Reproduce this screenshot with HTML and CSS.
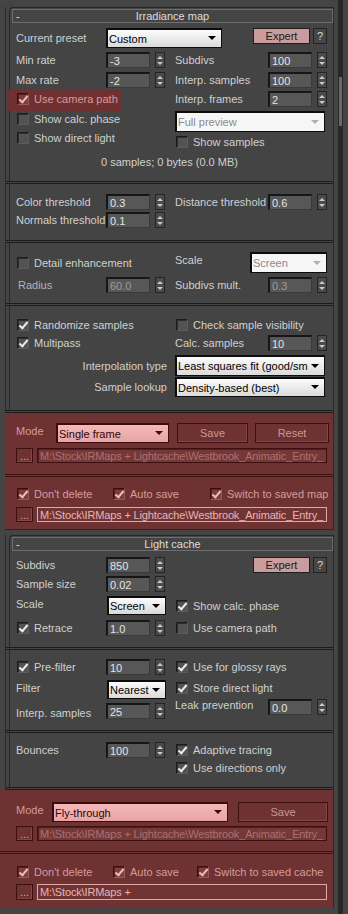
FILE: index.html
```html
<!DOCTYPE html>
<html lang="en">
<head>
    <meta charset="UTF-8">
    <title>GI settings</title>
    <link rel="stylesheet" href="styles.css">
</head>
<body>
<div class="screen">
    <div class="rollouts">

        <!-- Irradiance map rollout -->
        <div class="rollout first">
            <div class="cap"><div class="head"><span class="minus">-</span><span class="title">Irradiance map</span><span></span></div></div>

            <div class="group ir-a">
                <div class="line h20">
                    <span class="lbl">Current preset</span>
                    <div class="dd w-preset"><span class="txt">Custom</span><i class="arrow"></i></div>
                    <button class="btn expert">Expert</button>
                    <button class="btn help">?</button>
                </div>
                <div class="row mt4">
                    <div class="cell"><span class="lbl">Min rate</span><span class="num">-3</span><span class="spin"></span></div>
                    <div class="cell"><span class="lbl r">Subdivs</span><span class="num">100</span><span class="spin"></span></div>
                </div>
                <div class="row mt4">
                    <div class="cell"><span class="lbl">Max rate</span><span class="num">-2</span><span class="spin"></span></div>
                    <div class="cell"><span class="lbl r">Interp. samples</span><span class="num">100</span><span class="spin"></span></div>
                </div>
                <div class="row mt3">
                    <div class="cell"><div class="hl"><span class="chk on"></span><span class="cb-text">Use camera path</span></div></div>
                    <div class="cell"><span class="lbl r">Interp. frames</span><span class="num">2</span><span class="spin"></span></div>
                </div>
                <div class="row h21 mt4">
                    <div class="cell top"><label class="cb down2"><span class="chk"></span>Show calc. phase</label></div>
                    <div class="cell"><div class="dd off w-wide"><span class="txt">Full preview</span><i class="arrow"></i></div></div>
                </div>
                <div class="row">
                    <div class="cell top"><label class="cb"><span class="chk"></span>Show direct light</label></div>
                    <div class="cell bottom"><label class="cb"><span class="chk"></span>Show samples</label></div>
                </div>
                <div class="info">0 samples; 0 bytes (0.0 MB)</div>
            </div>

            <div class="group ir-b">
                <div class="row">
                    <div class="cell"><span class="lbl">Color threshold</span><span class="num">0.3</span><span class="spin"></span></div>
                    <div class="cell"><span class="lbl r">Distance threshold</span><span class="num">0.6</span><span class="spin"></span></div>
                </div>
                <div class="row mt2">
                    <div class="cell"><span class="lbl">Normals threshold</span><span class="num">0.1</span><span class="spin"></span></div>
                </div>
            </div>

            <div class="group ir-c">
                <div class="row h21">
                    <div class="cell"><label class="cb"><span class="chk"></span>Detail enhancement</label></div>
                    <div class="cell"><span class="lbl scale-lbl">Scale</span><div class="dd off w-scale"><span class="txt">Screen</span><i class="arrow"></i></div></div>
                </div>
                <div class="row mt4">
                    <div class="cell"><span class="lbl dim indent">Radius</span><span class="num dim">60.0</span><span class="spin"></span></div>
                    <div class="cell"><span class="lbl r">Subdivs mult.</span><span class="num dim">0.3</span><span class="spin"></span></div>
                </div>
            </div>

            <div class="group ir-d">
                <div class="row">
                    <div class="cell"><label class="cb"><span class="chk on"></span>Randomize samples</label></div>
                    <div class="cell"><label class="cb"><span class="chk"></span>Check sample visibility</label></div>
                </div>
                <div class="row mt2">
                    <div class="cell"><label class="cb"><span class="chk on"></span>Multipass</label></div>
                    <div class="cell"><span class="lbl r">Calc. samples</span><span class="num">10</span><span class="spin"></span></div>
                </div>
                <div class="line h21 mt4">
                    <span class="lbl right">Interpolation type</span>
                    <div class="dd w-wide"><span class="txt">Least squares fit (good/sm</span><i class="arrow"></i></div>
                </div>
                <div class="line h20 mt1">
                    <span class="lbl right">Sample lookup</span>
                    <div class="dd w-wide"><span class="txt">Density-based (best)</span><i class="arrow"></i></div>
                </div>
            </div>

            <div class="group red red-a ir-e">
                <div class="line h20">
                    <span class="lbl mode">Mode</span>
                    <div class="dd pink w-single"><span class="txt">Single frame</span><i class="arrow"></i></div>
                    <button class="btn rbtn save1">Save</button>
                    <button class="btn rbtn reset">Reset</button>
                </div>
                <div class="line h15 mt5">
                    <button class="btn dots">...</button>
                    <div class="path">M:\Stock\IRMaps + Lightcache\Westbrook_Animatic_Entry_</div>
                </div>
            </div>

            <div class="group red red-a last ir-f">
                <div class="line h16">
                    <label class="cb w96"><span class="chk on"></span>Don't delete</label>
                    <label class="cb w97"><span class="chk on"></span>Auto save</label>
                    <label class="cb"><span class="chk on"></span>Switch to saved map</label>
                </div>
                <div class="line h15 mt5">
                    <button class="btn dots">...</button>
                    <div class="path active">M:\Stock\IRMaps + Lightcache\Westbrook_Animatic_Entry_</div>
                </div>
            </div>
        </div>

        <!-- Light cache rollout -->
        <div class="rollout second">
            <div class="cap"><div class="head"><span class="minus">-</span><span class="title">Light cache</span><span></span></div></div>

            <div class="group lc-a">
                <div class="line">
                    <span class="lbl">Subdivs</span><span class="num">850</span><span class="spin"></span>
                    <button class="btn expert lc">Expert</button>
                    <button class="btn help lc">?</button>
                </div>
                <div class="row mt3">
                    <div class="cell"><span class="lbl">Sample size</span><span class="num">0.02</span><span class="spin"></span></div>
                </div>
                <div class="row h19 mt4">
                    <div class="cell"><span class="lbl up">Scale</span><div class="dd w-small"><span class="txt">Screen</span><i class="arrow"></i></div></div>
                    <div class="cell"><label class="cb"><span class="chk on"></span>Show calc. phase</label></div>
                </div>
                <div class="row mt5">
                    <div class="cell"><label class="cb w90"><span class="chk on"></span>Retrace</label><span class="num">1.0</span><span class="spin"></span></div>
                    <div class="cell"><label class="cb"><span class="chk"></span>Use camera path</label></div>
                </div>
            </div>

            <div class="group lc-b">
                <div class="row">
                    <div class="cell"><label class="cb w90"><span class="chk on"></span>Pre-filter</label><span class="num">10</span><span class="spin"></span></div>
                    <div class="cell"><label class="cb"><span class="chk on"></span>Use for glossy rays</label></div>
                </div>
                <div class="row h19 mt5">
                    <div class="cell"><span class="lbl up">Filter</span><div class="dd w-small"><span class="txt">Nearest</span><i class="arrow"></i></div></div>
                    <div class="cell top"><label class="cb down2"><span class="chk on"></span>Store direct light</label></div>
                </div>
                <div class="row h20">
                    <div class="cell bottom"><span class="lbl">Interp. samples</span><span class="num">25</span><span class="spin"></span></div>
                    <div class="cell top"><span class="lbl r">Leak prevention</span><span class="num">0.0</span><span class="spin"></span></div>
                </div>
            </div>

            <div class="group lc-c">
                <div class="row">
                    <div class="cell"><span class="lbl">Bounces</span><span class="num">100</span><span class="spin"></span></div>
                    <div class="cell"><label class="cb"><span class="chk on"></span>Adaptive tracing</label></div>
                </div>
                <div class="row mt2">
                    <div class="cell"></div>
                    <div class="cell"><label class="cb"><span class="chk on"></span>Use directions only</label></div>
                </div>
            </div>

            <div class="group red red-b lc-d">
                <div class="line h20">
                    <span class="lbl mode short">Mode</span>
                    <div class="dd pink w-fly"><span class="txt">Fly-through</span><i class="arrow"></i></div>
                    <button class="btn rbtn save2">Save</button>
                </div>
                <div class="line h15 mt4">
                    <button class="btn dots">...</button>
                    <div class="path">M:\Stock\IRMaps + Lightcache\Westbrook_Animatic_Entry_</div>
                </div>
            </div>

            <div class="group red red-b last lc-e">
                <div class="line h16">
                    <label class="cb w96"><span class="chk on"></span>Don't delete</label>
                    <label class="cb w84"><span class="chk on"></span>Auto save</label>
                    <label class="cb"><span class="chk on"></span>Switch to saved cache</label>
                </div>
                <div class="line h16 mt4">
                    <button class="btn dots">...</button>
                    <div class="path active">M:\Stock\IRMaps +</div>
                </div>
            </div>
        </div>
    </div>

    <div class="scrollbar"><div class="thumb"></div></div>
</div>
</body>
</html>
```

FILE: styles.css
```css
* {
    box-sizing: border-box;
}

body {
    margin: 0;
    width: 348px;
    height: 914px;
    overflow: hidden;
    background-color: #444;
    font-family: "Liberation Sans", Arial, sans-serif;
    font-size: 11px;
    color: #d0d0d0;
}

.screen {
    display: flex;
    height: 914px;
}

.rollouts {
    width: 338px;
}

.scrollbar {
    width: 5px;
    height: 914px;
    background-color: #272727;
}

.thumb {
    margin: 77px 0 0 1px;
    width: 3px;
    height: 49px;
    background-color: #6a6a6a;
}

/* rollout frame */
.rollout {
    margin-left: 5px;
    width: 329px;
    border-left: 1px solid #2a2a2a;
    border-right: 1px solid #2a2a2a;
}

.rollout.first {
    margin-top: 7px;
}

.rollout.second {
    margin-top: 5px;
}

.cap {
    margin-left: 3px;
    height: 16px;
    padding: 1px 0 0 2px;
    border-top: 1px solid #262626;
    border-left: 1px solid #262626;
    border-top-left-radius: 4px;
}

.head {
    height: 14px;
    border: 1px solid #6e6e6e;
    display: grid;
    grid-template-columns: 1fr auto 1fr;
    align-items: center;
    color: #dedede;
}

.minus {
    padding-left: 3px;
    line-height: 10px;
}

.title {
    line-height: 12px;
}

/* groups */
.group {
    padding-left: 10px;
    border-bottom: 3px double #1c1c1c;
    box-shadow: inset 3px 0 0 #444, inset 4px 0 0 #262626;
}

.ir-a { padding-top: 5px; padding-bottom: 13px; }
.ir-b { padding-top: 10px; padding-bottom: 12px; }
.ir-c { padding-top: 9px; padding-bottom: 10px; }
.ir-d { padding-top: 11px; padding-bottom: 13px; }
.ir-e { padding-top: 10px; padding-bottom: 11px; }
.ir-f { padding-top: 9px; padding-bottom: 7px; }

.lc-a { padding-top: 6px; padding-bottom: 11px; }
.lc-b { padding-top: 9px; padding-bottom: 11px; }
.lc-c { padding-top: 9px; padding-bottom: 11px; }
.lc-d { padding-top: 12px; padding-bottom: 10px; }
.lc-e { padding-top: 10px; padding-bottom: 8px; }

.red {
    background-color: #6f3232;
    border-bottom-color: #3e1212;
    box-shadow: none;
    color: #d49c9c;
}

.red-a {
    margin-left: -1px;
    padding-left: 11px;
}

.red-b {
    margin-left: -6px;
    padding-left: 16px;
}

.red.last {
    border-bottom: 1px solid #4a1a1a;
}

.lc-e.last {
    border-bottom: none;
}

/* rows */
.row {
    display: grid;
    grid-template-columns: 159px 152px;
    height: 16px;
}

.line {
    display: flex;
    align-items: center;
    height: 16px;
}

.cell {
    display: flex;
    align-items: center;
}

.cell.top { align-items: flex-start; }
.cell.bottom { align-items: flex-end; }

.h15 { height: 15px; }
.h16 { height: 16px; }
.h19 { height: 19px; }
.h20 { height: 20px; }
.h21 { height: 21px; }

.mt1 { margin-top: 1px; }
.mt2 { margin-top: 2px; }
.mt3 { margin-top: 3px; }
.mt4 { margin-top: 4px; }
.mt5 { margin-top: 5px; }

.lbl {
    flex: none;
    width: 90px;
    white-space: nowrap;
}

.lbl.r { width: 93px; }
.lbl.up { align-self: flex-start; margin-top: 2px; }
.lbl.indent { padding-left: 2px; }
.lbl.dim { color: #b4b4b4; }
.lbl.scale-lbl { width: 75px; align-self: flex-start; margin-top: 2px; }

.lbl.right {
    width: 152px;
    text-align: right;
    padding-right: 1px;
    margin-right: 7px;
}

.lbl.mode { width: 40px; margin-top: -4px; }
.lbl.mode.short { width: 36px; }

.info {
    margin-top: 8px;
    height: 12px;
    line-height: 12px;
    text-align: center;
    margin-left: -10px;
}

/* number fields and spinners */
.num {
    flex: none;
    width: 44px;
    height: 16px;
    display: flex;
    align-items: center;
    padding-left: 2px;
    background-color: #575757;
    border-top: 2px solid #161616;
    border-left: 2px solid #161616;
    border-right: 1px solid #3a3a3a;
    border-bottom: 1px solid #3a3a3a;
    color: #e4e4e4;
}

.num.dim { color: #9c9c9c; }

.spin {
    flex: none;
    width: 10px;
    height: 16px;
    margin-left: 5px;
    display: flex;
    flex-direction: column;
    align-items: center;
    justify-content: center;
    gap: 3px;
    background-color: #4b4b4b;
    border: 1px solid #242424;
}

.spin::before,
.spin::after {
    content: "";
    border-left: 3px solid transparent;
    border-right: 3px solid transparent;
}

.spin::before { border-bottom: 3px solid #cacaca; }
.spin::after { border-top: 3px solid #cacaca; }

/* checkboxes */
.cb {
    display: flex;
    align-items: center;
    gap: 5px;
    padding-left: 1px;
    white-space: nowrap;
}

.cb.down2 { margin-top: 2px; }
.w84 { width: 84px; flex: none; }
.w90 { width: 90px; flex: none; }
.w96 { width: 96px; flex: none; }
.w97 { width: 97px; flex: none; }

.chk {
    position: relative;
    flex: none;
    width: 12px;
    height: 12px;
    background-color: #535353;
    border: 1px solid #5c5c5c;
    border-top-color: #1c1c1c;
    border-left-color: #1c1c1c;
    box-shadow: inset 1px 1px 0 #2e2e2e;
}

.chk.on::after {
    content: "";
    position: absolute;
    left: 3px;
    top: 0;
    width: 3px;
    height: 7px;
    border: solid #ececec;
    border-width: 0 2px 2px 0;
    transform: rotate(40deg);
}

.red .chk,
.hl .chk {
    background-color: #7c3d3d;
    border-color: #9a5a5a;
    border-top-color: #3a0e0e;
    border-left-color: #3a0e0e;
    box-shadow: inset 1px 1px 0 #562222;
}

.red .chk.on::after,
.hl .chk.on::after {
    border-color: #ecbcbc;
}

.hl {
    display: flex;
    align-items: center;
    gap: 5px;
    width: 114px;
    margin: -3px 0 -6px -9px;
    padding: 3px 0 6px 10px;
    background-color: #6e3030;
    color: #d89c9c;
    white-space: nowrap;
}

/* dropdowns */
.dd {
    flex: none;
    display: flex;
    align-items: center;
    height: 100%;
    padding: 0 5px 0 2px;
    background: linear-gradient(#fefefe, #dadada);
    border: 1px solid #0c0c0c;
    box-shadow: inset 1px 1px 0 #0c0c0c;
    color: #000;
}

.dd .txt {
    flex: 1;
    overflow: hidden;
    white-space: nowrap;
    padding-top: 1px;
}

.arrow {
    flex: none;
    margin-left: 3px;
    border-left: 4px solid transparent;
    border-right: 4px solid transparent;
    border-top: 4px solid #000;
}

.dd.off {
    background: #f6f6f6;
    color: #8a8a8a;
}

.dd.off .arrow { border-top-color: #b0b0b0; }

.dd.pink {
    background: linear-gradient(#f5baba, #e8a4a4);
    border-color: #3a0c0c;
    box-shadow: inset 1px 1px 0 #3a0c0c;
    color: #2e0606;
}

.dd.pink .arrow { border-top-color: #3a0c0c; }

.w-preset { width: 116px; }
.w-wide { width: 150px; }
.w-scale { width: 77px; }
.w-small { width: 59px; margin-left: 1px; }
.w-single { width: 113px; }
.w-fly { width: 176px; }

/* buttons */
.btn {
    font-family: inherit;
    font-size: 11px;
    padding: 0;
    margin: 0;
    cursor: pointer;
}

.expert {
    align-self: flex-start;
    width: 57px;
    height: 16px;
    margin-left: 31px;
    background-color: #c99d9d;
    border: 1px solid #1e1e1e;
    color: #1a1a1a;
}

.expert.lc {
    margin-left: 88px;
}

.help {
    align-self: flex-start;
    width: 14px;
    height: 16px;
    margin-left: 3px;
    background-color: #464646;
    border: 1px solid #222;
    color: #d6d6d6;
}

.rbtn {
    height: 20px;
    background-color: #6f3232;
    border: 1px solid #3c1010;
    box-shadow: inset -1px -1px 0 #874646;
    color: #c99898;
}

.save1 { width: 71px; margin-left: 8px; }
.reset { width: 74px; margin-left: 7px; }
.save2 { width: 90px; margin-left: 10px; }

.dots {
    flex: none;
    width: 17px;
    height: 100%;
    background-color: #6f3232;
    border: 1px solid #3c1010;
    box-shadow: inset -1px -1px 0 #874646;
    color: #dba6a6;
    line-height: 8px;
}

.path {
    flex: none;
    width: 290px;
    height: 100%;
    margin-left: 4px;
    padding-left: 2px;
    display: flex;
    align-items: center;
    overflow: hidden;
    white-space: nowrap;
    letter-spacing: -0.15px;
    background-color: #763737;
    border: 1px solid #3c1010;
    box-shadow: inset 1px 1px 0 #541e1e;
    color: #a87272;
}

.path.active {
    border-color: #e2a8a8;
    box-shadow: none;
    background-color: #713434;
    color: #e8b4b4;
}
```
